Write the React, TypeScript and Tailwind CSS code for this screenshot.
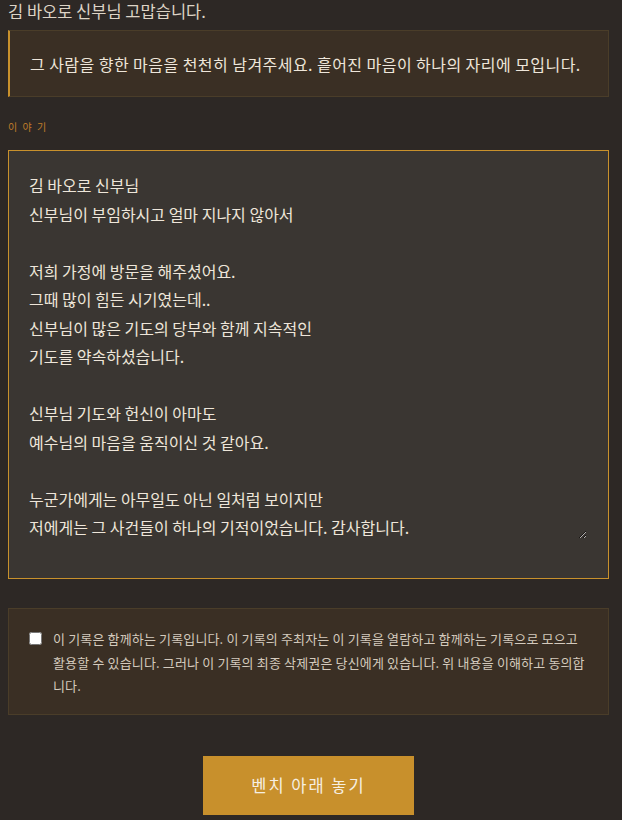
import { useState } from "react"

const story = `김 바오로 신부님
신부님이 부임하시고 얼마 지나지 않아서

저희 가정에 방문을 해주셨어요.
그때 많이 힘든 시기였는데..
신부님이 많은 기도의 당부와 함께 지속적인
기도를 약속하셨습니다.

신부님 기도와 헌신이 아마도
예수님의 마음을 움직이신 것 같아요.

누군가에게는 아무일도 아닌 일처럼 보이지만
저에게는 그 사건들이 하나의 기적이었습니다. 감사합니다.`

export default function App() {
  const [text, setText] = useState(story)
  const [agree, setAgree] = useState(false)

  return (
    <div
      className="min-h-screen bg-[#2d2825] pl-2 pr-[13px] text-[#e6ddd0]"
      style={{ fontFamily: '"Noto Sans CJK KR", "Noto Sans", sans-serif' }}
    >
      {/* Title */}
      <h2 className="pt-[1px] text-[16.5px] leading-[20px] text-[#ddd4c6]">
        김 바오로 신부님 고맙습니다.
      </h2>

      {/* Notice */}
      <div className="mt-[9px] h-[67px] flex items-center border border-[#4a3d29] border-l-2 border-l-[#c8912c] bg-[#3a2f24] px-5">
        <p className="text-[16px] leading-[22px] tracking-[0.45px] text-[#eee6da]">
          그 사람을 향한 마음을 천천히 남겨주세요. 흩어진 마음이 하나의 자리에 모입니다.
        </p>
      </div>

      {/* Story */}
      <label className="mt-[23px] block text-[10px] leading-[14px] tracking-[1.5px] text-[#c07e2a]">
        이 야 기
      </label>
      <div className="mt-[16px] h-[429px] border border-[#c8912c] bg-[#3a3632] pl-5 pr-[21px] pt-5">
        <textarea
          value={text}
          onChange={(e) => setText(e.target.value)}
          className="block h-[368px] w-full resize-y bg-transparent text-[16px] leading-[28.5px] text-[#eee6da] outline-none"
          style={{ fontFamily: '"Noto Sans CJK KR", "Noto Sans", sans-serif' }}
        />
      </div>

      {/* Consent */}
      <div className="mt-[29px] flex h-[107px] items-start gap-[11px] border border-[#4a3d29] bg-[#3a2f24] px-5 pt-[18px]">
        <input
          type="checkbox"
          checked={agree}
          onChange={(e) => setAgree(e.target.checked)}
          className="mt-[5px] h-[13px] w-[13px] shrink-0"
        />
        <p className="text-[13px] leading-[23.5px] tracking-[0.15px] text-[#d4cabd]">
          이 기록은 함께하는 기록입니다. 이 기록의 주최자는 이 기록을 열람하고 함께하는 기록으로 모으고 활용할 수 있습니다. 그러나 이 기록의 최종 삭제권은 당신에게 있습니다. 위 내용을 이해하고 동의합니다.
        </p>
      </div>

      {/* Submit */}
      <div className="mt-[41px] flex justify-center pb-2">
        <button className="h-[59px] w-[211px] bg-[#c8902c] text-[16.5px] tracking-[2px] text-[#f6efe2]">
          벤치 아래 놓기
        </button>
      </div>
    </div>
  )
}
